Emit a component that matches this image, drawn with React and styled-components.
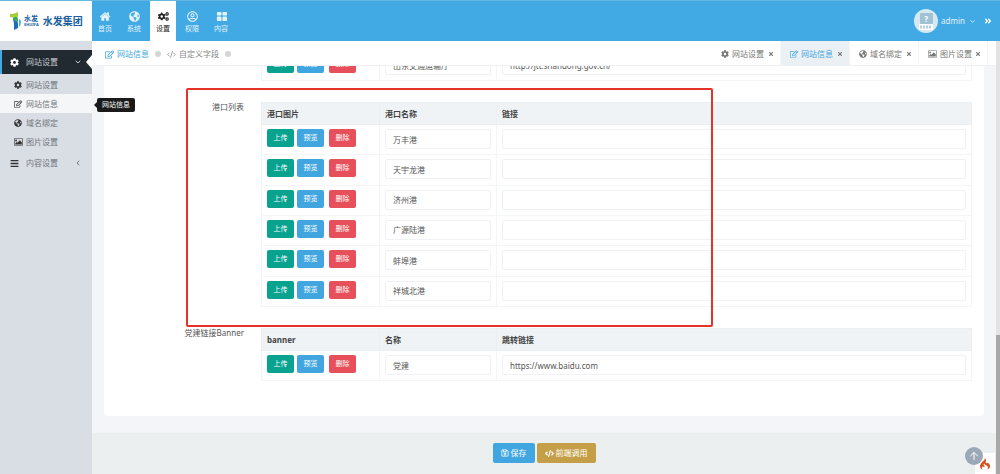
import React, { useState } from "react";
import styled, { createGlobalStyle, css } from "styled-components";
import {
  FaGlobeAmericas,
  FaCogs,
  FaCog,
  FaRegUserCircle,
  FaRegEdit,
  FaBars,
  FaRegSave,
  FaTimes,
  FaAngleDoubleRight,
} from "react-icons/fa";
import { SiCodeigniter } from "react-icons/si";
import { ArrowUp, ChevronDown, ChevronLeft, CodeXml } from "lucide-react";

const HomeIcon = ({ size }) => (
  <svg width={size} height={size} viewBox="64 128 1664 1536" fill="currentColor">
    <path d="M1408 992v480q0 26-19 45t-45 19h-384v-384h-256v384h-384q-26 0-45-19t-19-45v-480q0-1 .5-3t.5-3l575-474 575 474q1 2 1 6zm223-69l-62 74q-8 9-21 11h-3q-13 0-21-7l-692-577-692 577q-12 8-24 7-13-2-21-11l-62-74q-8-10-7-23.500t11-21.500l719-599q32-26 76-26t76 26l244 204v-195q0-14 9-23t23-9h192q14 0 23 9t9 23v408l219 182q10 8 11 21.500t-7 23.500z" />
  </svg>
);

const BlocksIcon = ({ size }) => (
  <svg width={size} height={size} viewBox="0 0 12 12" fill="currentColor">
    <rect x="1" y="1" width="5" height="4" rx="1" />
    <rect x="7" y="1" width="5" height="4" rx="1" />
    <rect x="1" y="6" width="5" height="5" rx="1" />
    <rect x="7" y="6" width="5" height="5" rx="1" />
  </svg>
);

const PictureIcon = ({ size }) => (
  <svg
    width={size + 1}
    height={size}
    viewBox="-64 128 1920 1536"
    fill="currentColor"
  >
    <path d="M576 576q0 80-56 136t-136 56-136-56-56-136 56-136 136-56 136 56 56 136zm1024 384v448h-1408v-192l320-320 160 160 512-512zm96-704h-1600q-13 0-22.500 9.500t-9.500 22.500v1216q0 13 9.500 22.500t22.500 9.500h1600q13 0 22.500-9.500t9.500-22.500v-1216q0-13-9.500-22.500t-22.500-9.500zm160 32v1216q0 66-47 113t-113 47h-1600q-66 0-113-47t-47-113v-1216q0-66 47-113t113-47h1600q66 0 113 47t47 113z" />
  </svg>
);

const navItems = [
  { name: "首页", icon: HomeIcon },
  { name: "系统", icon: FaGlobeAmericas },
  { name: "设置", icon: FaCogs, active: true },
  { name: "权限", icon: FaRegUserCircle },
  { name: "内容", icon: BlocksIcon },
];

const subItems = [
  { name: "网站设置", icon: FaCog },
  { name: "网站信息", icon: FaRegEdit, active: true },
  { name: "域名绑定", icon: FaGlobeAmericas },
  { name: "图片设置", icon: PictureIcon },
];

const links = [{ name: "山东交通运输厅", url: "http://jtt.shandong.gov.cn/" }];

const ports = [
  { name: "万丰港", url: "" },
  { name: "天宇龙港", url: "" },
  { name: "济州港", url: "" },
  { name: "广源陆港", url: "" },
  { name: "蚌埠港", url: "" },
  { name: "祥城北港", url: "" },
];

const banners = [{ name: "党建", url: "https://www.baidu.com" }];

const LinkTable = ({ label, heads, items, height }) => {
  const [rows, setRows] = useState(items);

  const change = (index, key, value) => {
    setRows(rows.map((row, i) => (i === index ? { ...row, [key]: value } : row)));
  };

  return (
    <Table $height={height} aria-label={label}>
      <colgroup>
        <Col $width="118px" />
        <Col $width="117px" />
        <Col />
      </colgroup>
      {heads && (
        <thead>
          <tr>
            {heads.map((head) => (
              <th key={head}>{head}</th>
            ))}
          </tr>
        </thead>
      )}
      <tbody>
        {rows.map((row, i) => (
          <tr key={i}>
            <td>
              <Actions>
                <SmallButton type="button" $color="#08a28f">
                  上传
                </SmallButton>
                <SmallButton type="button" $color="#41a6df" $spaced>
                  预览
                </SmallButton>
                <SmallButton type="button" $color="#e7505a">
                  删除
                </SmallButton>
              </Actions>
            </td>
            <td>
              <Input
                aria-label="名称"
                value={row.name}
                onChange={(e) => change(i, "name", e.target.value)}
              />
            </td>
            <td>
              <Input
                aria-label="链接"
                value={row.url}
                onChange={(e) => change(i, "url", e.target.value)}
              />
            </td>
          </tr>
        ))}
      </tbody>
    </Table>
  );
};

const Tab = ({ icon: Icon, name, active }) => (
  <TabItem $active={active}>
    <TabLink href="#">
      <Icon size={8} />
      {name}
    </TabLink>
    <CloseButton type="button" aria-label="关闭">
      <FaTimes size={6} />
    </CloseButton>
  </TabItem>
);

const App = () => {
  return (
    <Page>
      <GlobalStyle />
      <Header>
        <Logo href="#">
          <svg width="12" height="18" viewBox="0 0 12 18">
            <path d="M0 2 Q5 2 8 0 V6 Q7 4 5 5 Q3 6 0 5Z" fill="#a5cd39" />
            <path d="M3 6 Q7 3 8 7 V11 Q8 8 3 8Z" fill="#35a55b" />
            <path d="M3 8 Q8 8 8 12 V16 L4 18 V12 Q4 10 3 8Z" fill="#1a6fb5" />
            <path d="M9 7 Q11 8 11 10 Q11 13 9 15Z" fill="#3bb4e5" />
          </svg>
          <LogoMark>
            水发
            <small>SHUIFA</small>
          </LogoMark>
          <LogoName>水发集团</LogoName>
        </Logo>
        <Nav>
          {navItems.map(({ name, icon: Icon, active }) => (
            <NavLink key={name} href="#" $active={active}>
              <Icon size={11} />
              {name}
            </NavLink>
          ))}
        </Nav>
        <User>
          <Avatar>
            <svg width="24" height="24" viewBox="0 0 24 24">
              <rect x="6" y="4" width="13" height="11" rx="1" fill="#9fc3d4" />
              <rect x="5" y="15" width="14" height="6" fill="#fff" />
              <path
                d="M6 18h2M9 18h2M12 18h2M15 18h2"
                stroke="#b3cfdb"
                strokeWidth="3"
              />
            </svg>
            <b>?</b>
          </Avatar>
          <UserButton type="button">
            admin
            <ChevronDown size={7} strokeWidth={3} />
          </UserButton>
          <FaAngleDoubleRight size={8} />
        </User>
      </Header>

      <Body>
        <Sidebar>
          <MenuItem href="#" $active>
            <FaCog size={9} />
            <span>网站设置</span>
            <ChevronDown size={8} strokeWidth={3} />
          </MenuItem>
          <SubMenu>
            {subItems.map(({ name, icon: Icon, active }) => (
              <SubItem key={name} href="#" $active={active}>
                <Icon size={8} />
                <span>{name}</span>
                {active && <Tooltip>{name}</Tooltip>}
              </SubItem>
            ))}
          </SubMenu>
          <MenuItem href="#">
            <FaBars size={9} />
            <span>内容设置</span>
            <ChevronLeft size={8} strokeWidth={3} />
          </MenuItem>
        </Sidebar>

        <Main>
          <TabBar>
            <Crumbs>
              <Crumb href="#" $active>
                <FaRegEdit size={9} />
                网站信息
              </Crumb>
              <Dot />
              <Crumb href="#">
                <CodeXml size={9} />
                自定义字段
              </Crumb>
              <Dot />
            </Crumbs>
            <Tabs>
              <Tab icon={FaCog} name="网站设置" />
              <Tab icon={FaRegEdit} name="网站信息" active />
              <Tab icon={FaGlobeAmericas} name="域名绑定" />
              <Tab icon={PictureIcon} name="图片设置" />
            </Tabs>
          </TabBar>

          <Content>
            <Card>
              <Group>
                <GroupName />
                <LinkTable label="友情链接" items={links} height="31px" />
              </Group>
              <Group>
                <GroupName>港口列表</GroupName>
                <LinkTable
                  label="港口列表"
                  heads={["港口图片", "港口名称", "链接"]}
                  items={ports}
                  height="205px"
                />
                <RedFrame />
              </Group>
              <Group>
                <GroupName>党建链接Banner</GroupName>
                <LinkTable
                  label="党建链接Banner"
                  heads={["banner", "名称", "跳转链接"]}
                  items={banners}
                  height="53px"
                />
              </Group>
            </Card>
          </Content>

          <Footer>
            <Button type="button" $color="#41a6df">
              <FaRegSave size={8} />
              保存
            </Button>
            <Button type="button" $color="#c49f47">
              <CodeXml size={9} strokeWidth={3} />
              前端调用
            </Button>
          </Footer>
        </Main>

        <ScrollTrack>
          <ScrollThumb />
        </ScrollTrack>
      </Body>

      <DebugTile>
        <SiCodeigniter size={12} />
      </DebugTile>
      <TopButton type="button" aria-label="返回顶部">
        <ArrowUp size={12} />
      </TopButton>
    </Page>
  );
};

export default App;

const GlobalStyle = createGlobalStyle`
  * {
    box-sizing: border-box;
  }

  body {
    margin: 0;
    font-family: "Noto Sans", "Noto Sans CJK SC", sans-serif;
    font-size: 8px;
    line-height: 10px;
    color: #555;
  }

  a {
    color: inherit;
    text-decoration: none;
  }

  button,
  input {
    font: inherit;
  }

  svg {
    flex: none;
  }
`;

const Page = styled.div`
  display: flex;
  flex-direction: column;
  height: 100vh;
  overflow: hidden;
`;

const Header = styled.header`
  display: flex;
  flex: none;
  height: 41px;
  background: #41a9e3;
  border-top: 1px solid #66b5dd;
`;

const Logo = styled.a`
  display: flex;
  align-items: center;
  gap: 2px;
  width: 92px;
  padding-left: 10px;
  background: #fff;
  color: #1a5f9e;
  font-weight: 700;
  white-space: nowrap;
`;

const LogoMark = styled.span`
  display: flex;
  flex-direction: column;
  font-size: 7px;
  line-height: 8px;

  small {
    font-size: 4px;
    line-height: 4px;
  }
`;

const LogoName = styled.span`
  margin-left: 2px;
  font-size: 10px;
`;

const Nav = styled.nav`
  display: flex;
  gap: 3px;
`;

const NavLink = styled.a`
  display: flex;
  flex-direction: column;
  align-items: center;
  gap: 2px;
  width: 26px;
  padding-top: 10px;
  font-size: 7px;
  color: #e4f3fb;

  ${(props) =>
    props.$active &&
    css`
      background: #fff;
      color: #222;
    `}
`;

const User = styled.div`
  display: flex;
  align-items: center;
  margin-left: auto;
  padding-right: 8px;
  color: #fff;
`;

const Avatar = styled.span`
  position: relative;
  width: 24px;
  height: 24px;
  border-radius: 50%;
  overflow: hidden;
  background: #d7e9f0;

  b {
    position: absolute;
    top: 5px;
    left: 0;
    width: 100%;
    color: #fff;
    text-align: center;
  }
`;

const UserButton = styled.button`
  display: flex;
  align-items: center;
  gap: 4px;
  margin-right: 8px;
  padding: 0 0 0 3px;
  border: 0;
  background: none;
  color: #e4f3fb;
`;

const Body = styled.div`
  display: flex;
  flex: 1;
  min-height: 0;
`;

const Sidebar = styled.aside`
  flex: none;
  width: 92px;
  padding-top: 9px;
  background: #d9dde4;
`;

const MenuItem = styled.a`
  position: relative;
  display: flex;
  align-items: center;
  gap: 7px;
  height: 24px;
  padding: 0 10px;
  color: #6f757b;

  svg:first-child {
    color: #333;
  }

  span {
    flex: 1;
  }

  ${(props) =>
    props.$active &&
    css`
      background: #222a31;
      color: #c5cad0;
      box-shadow: inset 2px 0 #41a9e3;

      svg:first-child {
        color: #fff;
      }

      &::after {
        content: "";
        position: absolute;
        top: 5px;
        right: 0;
        border: 7px solid transparent;
        border-left: 0;
        border-right: 6px solid #fff;
      }
    `}
`;

const SubMenu = styled.div`
  padding-top: 1px;
`;

const SubItem = styled.a`
  position: relative;
  display: grid;
  grid-template-columns: 12px 1fr;
  align-items: center;
  height: 19px;
  padding-left: 14px;
  background: ${(props) => (props.$active ? "#f5f6f8" : "none")};
  color: #6f757b;

  svg {
    color: #333;
  }
`;

const Tooltip = styled.span`
  position: absolute;
  z-index: 2;
  top: 4px;
  left: 97px;
  padding: 2px 5px;
  border-radius: 2px;
  background: #1a1a1a;
  color: #fff;
  font-size: 7px;
  white-space: nowrap;

  &::before {
    content: "";
    position: absolute;
    top: 4px;
    left: -3px;
    border: 3px solid transparent;
    border-left: 0;
    border-right-color: #1a1a1a;
  }
`;

const Main = styled.main`
  display: flex;
  flex: 1;
  flex-direction: column;
  min-width: 0;
  background: #f3f5f8;
`;

const TabBar = styled.div`
  display: flex;
  flex: none;
  justify-content: space-between;
  height: 25px;
  padding: 0 8px 0 13px;
  background: #fff;
  border-bottom: 1px solid #eef0f3;
`;

const Crumbs = styled.div`
  display: flex;
  align-items: center;
  gap: 6px;
  padding-top: 2px;
`;

const Crumb = styled.a`
  display: flex;
  align-items: center;
  gap: 3px;
  color: ${(props) => (props.$active ? "#41a6df" : "#888")};
`;

const Dot = styled.i`
  width: 6px;
  height: 6px;
  border-radius: 50%;
  background: #d5d5d5;
`;

const Tabs = styled.div`
  display: flex;
`;

const TabItem = styled.div`
  display: flex;
  align-items: center;
  justify-content: space-between;
  width: 69px;
  padding: 2px 6px 0 9px;
  border-right: 1px solid #f4f5f7;
  background: ${(props) => (props.$active ? "#ebf0f4" : "none")};
  color: ${(props) => (props.$active ? "#41a6df" : "#777")};
`;

const TabLink = styled.a`
  display: flex;
  align-items: center;
  gap: 3px;
`;

const CloseButton = styled.button`
  display: flex;
  padding: 0;
  border: 0;
  background: none;
  color: #777;
`;

/* 滚动到底部的状态 */
const Content = styled.div`
  display: flex;
  flex: 1;
  flex-direction: column;
  justify-content: flex-end;
  min-height: 0;
  padding: 0 12px 17px;
  overflow: hidden;
`;

const Card = styled.div`
  display: flex;
  flex: none;
  flex-direction: column;
  gap: 21px;
  padding: 0 12px 35px 0;
  border-radius: 0 0 3px 3px;
  background: #fff;
`;

const Group = styled.div`
  position: relative;
  display: grid;
  grid-template-columns: 140px 1fr;
  gap: 17px;
`;

const GroupName = styled.span`
  text-align: right;
`;

const RedFrame = styled.div`
  position: absolute;
  top: -14px;
  left: 82px;
  width: 527px;
  height: 239px;
  border: 2px solid #e5332a;
  border-radius: 2px;
  pointer-events: none;
`;

const Table = styled.table`
  width: 100%;
  height: ${(props) => props.$height};
  table-layout: fixed;
  border-collapse: collapse;
  border: 1px solid #f1f3f5;

  th {
    height: 22px;
    padding: 0 5px;
    border: 1px solid #ebeff2;
    background: #eff3f6;
    color: #444;
    font-weight: 700;
    text-align: left;
  }

  td {
    padding: 4px 5px;
    border: 1px solid #f3f5f7;
    vertical-align: top;
  }
`;

const Col = styled.col`
  width: ${(props) => props.$width || "auto"};
`;

const Actions = styled.div`
  display: flex;
  gap: 3px;
`;

const SmallButton = styled.button`
  width: 27px;
  height: 18px;
  margin-right: ${(props) => (props.$spaced ? "2px" : "0")};
  padding: 0;
  border: 0;
  border-radius: 2px;
  background: ${(props) => props.$color};
  color: #fff;
  font-size: 7px;
`;

const Input = styled.input`
  display: block;
  width: 100%;
  height: 20px;
  padding: 0 7px;
  border: 1px solid #eff1f4;
  border-radius: 2px;
  background: #fff;
  color: #555;
`;

const Footer = styled.footer`
  display: flex;
  flex: none;
  justify-content: center;
  gap: 2px;
  height: 41px;
  padding-top: 10px;
  background: #ebefef;
`;

const Button = styled.button`
  display: flex;
  align-items: center;
  gap: 2px;
  height: 20px;
  padding: 0 8px;
  border: 0;
  border-radius: 2px;
  background: ${(props) => props.$color};
  color: #fff;
`;

const ScrollTrack = styled.div`
  display: flex;
  flex: none;
  flex-direction: column;
  justify-content: flex-end;
  width: 4px;
  background: #e3e3e3;
`;

const ScrollThumb = styled.div`
  height: 32%;
  background: #a8a8a8;
`;

const DebugTile = styled.div`
  position: fixed;
  right: 5px;
  bottom: 0;
  display: flex;
  align-items: center;
  justify-content: center;
  width: 20px;
  height: 21px;
  background: #fff;
  color: #d9501e;
`;

const TopButton = styled.button`
  position: fixed;
  right: 17px;
  bottom: 9px;
  display: flex;
  align-items: center;
  justify-content: center;
  width: 18px;
  height: 18px;
  padding: 0;
  border: 0;
  border-radius: 50%;
  background: #9ba8b7;
  color: #fff;
`;
